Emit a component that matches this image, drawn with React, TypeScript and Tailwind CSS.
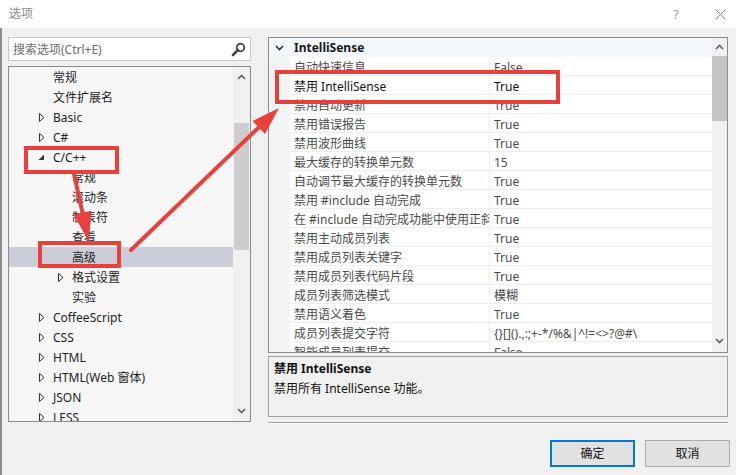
import React from "react";

const FONT = "font-['Noto_Sans','Noto_Sans_CJK_SC',sans-serif]";

function Arrow({ x1, y1, x2, y2, head = 26, half = 9, w = 4 }: { x1: number; y1: number; x2: number; y2: number; head?: number; half?: number; w?: number }) {
  const dx = x2 - x1, dy = y2 - y1;
  const len = Math.hypot(dx, dy);
  const ux = dx / len, uy = dy / len;
  const bx = x2 - ux * head, by = y2 - uy * head;
  const px = -uy, py = ux;
  const pts = `${x2},${y2} ${bx + px * half},${by + py * half} ${bx - px * half},${by - py * half}`;
  return (
    <g>
      <line x1={x1} y1={y1} x2={bx + ux * 4} y2={by + uy * 4} stroke="#e8403a" strokeWidth={w} strokeLinecap="round" />
      <polygon points={pts} fill="#e8403a" />
    </g>
  );
}

function RightTri({ x }: { x: number }) {
  return (
    <svg width="6" height="9" viewBox="0 0 6 9" className="absolute top-[6px]" style={{ left: x }}>
      <path d="M0.5 0.5 L5 4.5 L0.5 8.5 Z" fill="none" stroke="#333" strokeWidth="1" />
    </svg>
  );
}

function DownTri({ x }: { x: number }) {
  return (
    <svg width="7" height="7" viewBox="0 0 7 7" className="absolute top-[7px]" style={{ left: x }}>
      <path d="M6 0.5 L6 6 L0.5 6 Z" fill="#333" />
    </svg>
  );
}

function ChevUp() {
  return (
    <svg width="9" height="6" viewBox="0 0 9 6">
      <path d="M1 5 L4.5 1.5 L8 5" fill="none" stroke="#606060" strokeWidth="1.6" />
    </svg>
  );
}
function ChevDown() {
  return (
    <svg width="9" height="6" viewBox="0 0 9 6">
      <path d="M1 1 L4.5 4.5 L8 1" fill="none" stroke="#606060" strokeWidth="1.6" />
    </svg>
  );
}

type TreeItem = { label: string; level: 1 | 2; arrow?: "right" | "down"; selected?: boolean };
const tree: TreeItem[] = [
  { label: "常规", level: 1 },
  { label: "文件扩展名", level: 1 },
  { label: "Basic", level: 1, arrow: "right" },
  { label: "C#", level: 1, arrow: "right" },
  { label: "C/C++", level: 1, arrow: "down" },
  { label: "常规", level: 2 },
  { label: "滚动条", level: 2 },
  { label: "制表符", level: 2 },
  { label: "查看", level: 2 },
  { label: "高级", level: 2, selected: true },
  { label: "格式设置", level: 2, arrow: "right" },
  { label: "实验", level: 2 },
  { label: "CoffeeScript", level: 1, arrow: "right" },
  { label: "CSS", level: 1, arrow: "right" },
  { label: "HTML", level: 1, arrow: "right" },
  { label: "HTML(Web 窗体)", level: 1, arrow: "right" },
  { label: "JSON", level: 1, arrow: "right" },
  { label: "LESS", level: 1, arrow: "right" },
];

const props: [string, string][] = [
  ["自动快速信息", "False"],
  ["禁用 IntelliSense", "True"],
  ["禁用自动更新", "True"],
  ["禁用错误报告", "True"],
  ["禁用波形曲线", "True"],
  ["最大缓存的转换单元数", "15"],
  ["自动调节最大缓存的转换单元数", "True"],
  ["禁用 #include 自动完成", "True"],
  ["在 #include 自动完成功能中使用正斜杠", "True"],
  ["禁用主动成员列表", "True"],
  ["禁用成员列表关键字", "True"],
  ["禁用成员列表代码片段", "True"],
  ["成员列表筛选模式", "模糊"],
  ["禁用语义着色", "True"],
  ["成员列表提交字符", "{}[]().,:;+-*/%&|^!=<>?@#\\"],
  ["智能成员列表提交", "False"],
];

export default function App() {
  return (
    <div className={`relative w-[736px] h-[475px] overflow-hidden bg-[#f0f0f0] text-[12px] leading-none ${FONT}`}>
      {/* title bar */}
      <div className="h-[28px] bg-white flex items-center justify-between">
        <span className="ml-[9px] text-[#8a8a8a] text-[12px]">选项</span>
        <div className="flex items-center mr-[10px] gap-[36px] text-[#9a9a9a]">
          <span className="text-[13px]">?</span>
          <svg width="11" height="11" viewBox="0 0 11 11">
            <path d="M0.5 0.5 L10.5 10.5 M10.5 0.5 L0.5 10.5" stroke="#8a8a8a" strokeWidth="1" />
          </svg>
        </div>
      </div>

      {/* body */}
      <div className="h-[447px] border-l-2 border-[#8d8d8d] flex flex-col">
        <div className="flex pt-[9px] pl-[6px]">
          {/* left column */}
          <div className="w-[243px] flex flex-col">
            <div className="h-[24px] bg-white border border-[#c8c8c8] flex items-center justify-between pl-[4px] pr-[4px]">
              <span className="text-[#6d6d6d] pt-[1px]">搜索选项(Ctrl+E)</span>
              <svg width="15" height="15" viewBox="0 0 15 15">
                <circle cx="9.5" cy="5.5" r="3.8" fill="none" stroke="#444" strokeWidth="1.8" />
                <path d="M6.8 8.2 L2 13" stroke="#444" strokeWidth="2.6" strokeLinecap="round" />
              </svg>
            </div>
            <div className="mt-[5px] h-[356px] border border-[#8c8c8c] bg-[#f6f6f6] flex overflow-hidden">
              <div className="flex-1 flex flex-col overflow-hidden">
                {tree.map((t, i) => (
                  <div key={i} className={`relative h-[20px] shrink-0 flex items-center pt-[2px] ${t.selected ? "bg-[#cbcdd9]" : ""}`}>
                    {t.arrow === "right" && <RightTri x={t.level === 1 ? 30 : 49} />}
                    {t.arrow === "down" && <DownTri x={t.level === 1 ? 29 : 48} />}
                    <span className={`text-[#1e1e1e] ${t.level === 1 ? "ml-[44px]" : "ml-[63px]"}`}>{t.label}</span>
                  </div>
                ))}
              </div>
              <div className="w-[17px] bg-[#f0f0f0] flex flex-col items-center">
                <div className="h-[20px] flex items-center justify-center"><ChevUp /></div>
                <div className="h-[36px]" />
                <div className="w-[15px] h-[127px] bg-[#cdcdcd]" />
                <div className="flex-1" />
                <div className="h-[20px] flex items-center justify-center"><ChevDown /></div>
              </div>
            </div>
          </div>

          {/* right column */}
          <div className="ml-[17px] w-[460px] flex flex-col">
            <div className="h-[316px] border border-[#8c8c8c] bg-white flex overflow-hidden">
              <div className="flex-1 flex flex-col overflow-hidden">
                <div className="h-[19px] shrink-0 bg-[#f3f6fb] flex items-center pt-[1px]">
                  <svg width="9" height="6" viewBox="0 0 9 6" className="ml-[6px]">
                    <path d="M1 1 L4.5 4.5 L8 1" fill="none" stroke="#333" strokeWidth="1.6" />
                  </svg>
                  <span className="ml-[10px] font-bold text-[#1a1a1a]">IntelliSense</span>
                </div>
                {props.map(([n, v], i) => (
                  <div key={i} className="h-[19px] shrink-0 flex">
                    <div className="w-[21px] bg-[#f3f4f6]" />
                    <div className={`w-[200px] flex items-center pl-[4px] pt-[3px] border-b border-r border-[#eeeeee] overflow-hidden whitespace-nowrap ${i === 1 ? "text-[#111]" : "text-[#4a4a4a]"}`}>{n}</div>
                    <div className={`flex-1 flex items-center pl-[4px] pt-[3px] border-b border-[#eeeeee] whitespace-nowrap ${i === 1 ? "text-[#111]" : "text-[#4a4a4a]"}`}>{v}</div>
                  </div>
                ))}
              </div>
              <div className="w-[15px] bg-[#f0f0f0] flex flex-col items-center">
                <div className="h-[18px] flex items-center justify-center"><ChevUp /></div>
                <div className="w-[15px] h-[65px] bg-[#c3c3c3]" />
                <div className="flex-1" />
                <div className="h-[22px] flex items-center justify-center"><ChevDown /></div>
              </div>
            </div>
            <div className="mt-[3px] h-[61px] border border-[#a0a0a0] px-[5px] pt-[6px] flex flex-col gap-[8px]">
              <span className="font-bold text-[#111]">禁用 IntelliSense</span>
              <span className="text-[#111]">禁用所有 IntelliSense 功能。</span>
            </div>
            <div className="mt-[5px] h-[2px] border-t border-[#a0a0a0] border-b border-b-white" />
          </div>
        </div>

        {/* buttons */}
        <div className="flex justify-end gap-[10px] mt-[16px] pr-[6px]">
          <button className="w-[85px] h-[27px] bg-[#e1e1e1] border-2 border-[#0078d7] text-[#111] text-[12px]">确定</button>
          <button className="w-[85px] h-[27px] bg-[#e1e1e1] border border-[#adadad] text-[#111] text-[12px]">取消</button>
        </div>
      </div>

      {/* annotations */}
      <svg width="736" height="475" className="absolute top-0 left-0 pointer-events-none">
        <rect x="26" y="148" width="91" height="24" fill="none" stroke="#e8403a" strokeWidth="4" />
        <rect x="40" y="243" width="79" height="23" fill="none" stroke="#e8403a" strokeWidth="4" />
        <rect x="277" y="72" width="281" height="30" fill="none" stroke="#e8403a" strokeWidth="4" />
        <Arrow x1={74} y1={174} x2={89} y2={242} head={30} half={9} />
        <Arrow x1={131} y1={250} x2={279} y2={108} head={28} half={9} />
      </svg>
    </div>
  );
}
